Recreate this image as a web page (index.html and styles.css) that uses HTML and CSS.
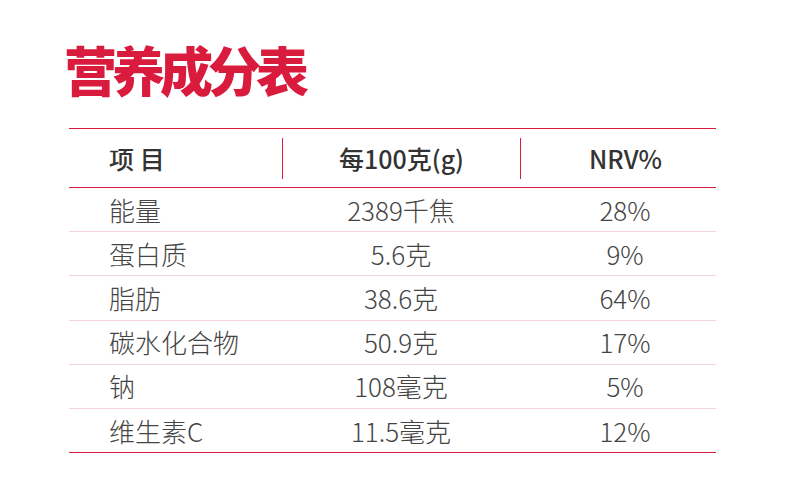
FILE: index.html
```html
<!DOCTYPE html>
<html lang="zh-CN">
<head>
<meta charset="utf-8">
<title>营养成分表</title>
<link rel="stylesheet" href="styles.css">
</head>
<body>
<div class="page">
  <h1 class="title">营养成分表</h1>
  <div class="table">
    <div class="row head">
      <div class="cell c1">项&nbsp;目</div>
      <div class="cell c2 div">每100克(g)</div>
      <div class="cell c3 div">NRV%</div>
    </div>
    <div class="row"><div class="cell c1">能量</div><div class="cell c2">2389千焦</div><div class="cell c3">28%</div></div>
    <div class="row"><div class="cell c1">蛋白质</div><div class="cell c2">5.6克</div><div class="cell c3">9%</div></div>
    <div class="row"><div class="cell c1">脂肪</div><div class="cell c2">38.6克</div><div class="cell c3">64%</div></div>
    <div class="row"><div class="cell c1">碳水化合物</div><div class="cell c2">50.9克</div><div class="cell c3">17%</div></div>
    <div class="row"><div class="cell c1">钠</div><div class="cell c2">108毫克</div><div class="cell c3">5%</div></div>
    <div class="row last"><div class="cell c1">维生素C</div><div class="cell c2">11.5毫克</div><div class="cell c3">12%</div></div>
  </div>
</div>
</body>
</html>
```
FILE: styles.css
```css
html, body {
  margin: 0;
  padding: 0;
  background: #ffffff;
}
body {
  width: 790px;
  height: 500px;
  overflow: hidden;
  font-family: "Noto Sans CJK SC", "Noto Sans", sans-serif;
}
.page {
  display: flex;
  flex-direction: column;
  padding: 38px 0 0 69px;
}
.title {
  margin: 0 0 0 -5px;
  font-size: 53px;
  line-height: 62px;
  height: 62px;
  font-weight: 900;
  letter-spacing: -5px;
  color: #d91c3e;
}
.table {
  margin-top: 28px;
  width: 647px;
  border-top: 1px solid #d91c3e;
}
.row {
  display: grid;
  grid-template-columns: 213px 238px 196px;
  align-items: center;
  height: 44.2px;
  box-sizing: border-box;
  border-bottom: 1px solid #f6d3da;
  color: #444444;
  font-size: 26px;
  font-weight: 300;
}
.row.head {
  height: 59px;
  border-bottom: 1px solid #d91c3e;
  color: #333333;
  font-size: 25px;
  font-weight: 500;
}
.row.last {
  border-bottom: 1px solid #d91c3e;
}
.cell {
  display: flex;
  align-items: center;
  line-height: 1;
}
.c1 {
  padding-left: 40px;
}
.c2 {
  justify-content: center;
}
.c3 {
  justify-content: center;
  padding-left: 14px;
}
.div {
  height: 41px;
  border-left: 1px solid #d91c3e;
}
```
